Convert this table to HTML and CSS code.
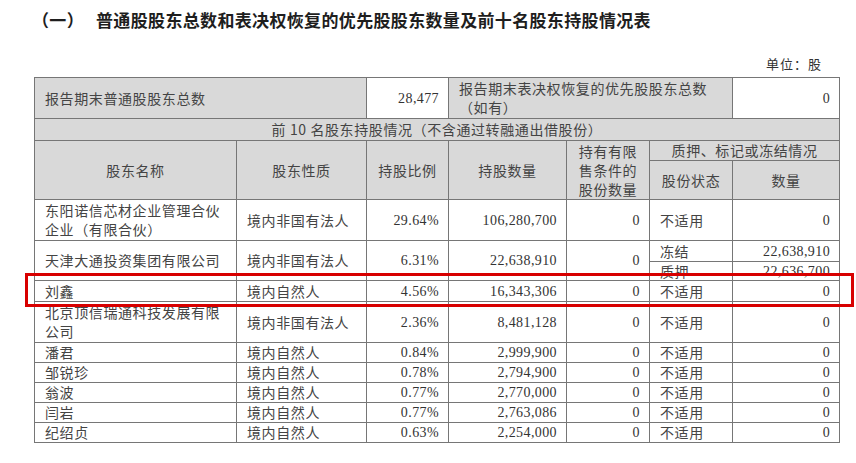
FILE: index.html
```html
<!DOCTYPE html>
<html lang="zh-CN">
<head>
<meta charset="utf-8">
<title>普通股股东总数及前十名股东持股情况表</title>
<link rel="stylesheet" href="styles.css">
</head>
<body>
<div class="page">
  <h2 class="title"><span class="title-no">（一）</span>普通股股东总数和表决权恢复的优先股股东数量及前十名股东持股情况表</h2>
  <div class="unit">单位：股</div>
  <div class="table-wrap">
    <table class="holders">
      <colgroup>
        <col class="c-name"><col class="c-type"><col class="c-ratio"><col class="c-qty"><col class="c-limit"><col class="c-state"><col class="c-amount">
      </colgroup>
      <tr class="r-tall">
        <td colspan="2" class="hd">报告期末普通股股东总数</td>
        <td class="num">28,477</td>
        <td colspan="3" class="hd">报告期末表决权恢复的优先股股东总数<br>（如有）</td>
        <td class="num">0</td>
      </tr>
      <tr class="r-sec">
        <td colspan="7" class="hd center">前 10 名股东持股情况（不含通过转融通出借股份）</td>
      </tr>
      <tr class="r-h1">
        <td rowspan="2" class="hd center">股东名称</td>
        <td rowspan="2" class="hd center">股东性质</td>
        <td rowspan="2" class="hd center">持股比例</td>
        <td rowspan="2" class="hd center">持股数量</td>
        <td rowspan="2" class="hd center">持有有限<br>售条件的<br>股份数量</td>
        <td colspan="2" class="hd center">质押、标记或冻结情况</td>
      </tr>
      <tr class="r-h2">
        <td class="hd center">股份状态</td>
        <td class="hd center">数量</td>
      </tr>
      <tr class="r-tall">
        <td>东阳诺信芯材企业管理合伙企业（有限合伙）</td>
        <td>境内非国有法人</td>
        <td class="num">29.64%</td>
        <td class="num">106,280,700</td>
        <td class="num">0</td>
        <td>不适用</td>
        <td class="num">0</td>
      </tr>
      <tr class="r-sub1">
        <td rowspan="2">天津大通投资集团有限公司</td>
        <td rowspan="2">境内非国有法人</td>
        <td rowspan="2" class="num">6.31%</td>
        <td rowspan="2" class="num">22,638,910</td>
        <td rowspan="2" class="num">0</td>
        <td>冻结</td>
        <td class="num">22,638,910</td>
      </tr>
      <tr class="r-sub2">
        <td class="pledge">质押</td>
        <td class="num pledge">22,636,700</td>
      </tr>
      <tr class="r-one">
        <td>刘鑫</td>
        <td>境内自然人</td>
        <td class="num">4.56%</td>
        <td class="num">16,343,306</td>
        <td class="num">0</td>
        <td>不适用</td>
        <td class="num">0</td>
      </tr>
      <tr class="r-tall">
        <td>北京顶信瑞通科技发展有限公司</td>
        <td>境内非国有法人</td>
        <td class="num">2.36%</td>
        <td class="num">8,481,128</td>
        <td class="num">0</td>
        <td>不适用</td>
        <td class="num">0</td>
      </tr>
      <tr class="r-small">
        <td>潘君</td>
        <td>境内自然人</td>
        <td class="num">0.84%</td>
        <td class="num">2,999,900</td>
        <td class="num">0</td>
        <td>不适用</td>
        <td class="num">0</td>
      </tr>
      <tr class="r-small">
        <td>邹锐珍</td>
        <td>境内自然人</td>
        <td class="num">0.78%</td>
        <td class="num">2,794,900</td>
        <td class="num">0</td>
        <td>不适用</td>
        <td class="num">0</td>
      </tr>
      <tr class="r-small">
        <td>翁波</td>
        <td>境内自然人</td>
        <td class="num">0.77%</td>
        <td class="num">2,770,000</td>
        <td class="num">0</td>
        <td>不适用</td>
        <td class="num">0</td>
      </tr>
      <tr class="r-small">
        <td>闫岩</td>
        <td>境内自然人</td>
        <td class="num">0.77%</td>
        <td class="num">2,763,086</td>
        <td class="num">0</td>
        <td>不适用</td>
        <td class="num">0</td>
      </tr>
      <tr class="r-small">
        <td>纪绍贞</td>
        <td>境内自然人</td>
        <td class="num">0.63%</td>
        <td class="num">2,254,000</td>
        <td class="num">0</td>
        <td>不适用</td>
        <td class="num">0</td>
      </tr>
    </table>
    <div class="highlight"></div>
  </div>
</div>
</body>
</html>
```

FILE: styles.css
```css
html, body {
  margin: 0;
  padding: 0;
  background: #ffffff;
}

.page {
  width: 856px;
  height: 463px;
  font-family: "Noto Sans CJK SC", "Noto Sans", sans-serif;
  color: #3a3a3a;
}

.title {
  margin: 0;
  padding: 10px 0 0 32px;
  font-size: 17px;
  line-height: 20px;
  font-weight: 700;
  letter-spacing: 0.34px;
  color: #1e1e1e;
}

.title-no {
  margin-right: 12px;
}

.unit {
  margin-top: 25px;
  width: 822px;
  text-align: right;
  font-size: 13px;
  line-height: 18px;
  letter-spacing: 1px;
  color: #333333;
}

.table-wrap {
  position: relative;
  margin: 4px 0 0 34px;
  width: 805px;
}

.holders {
  width: 805px;
  table-layout: fixed;
  border-collapse: collapse;
  font-size: 14px;
  letter-spacing: 0.6px;
  color: #444444;
}

.c-name { width: 202px; }
.c-type { width: 130px; }
.c-ratio { width: 82px; }
.c-qty { width: 118px; }
.c-limit { width: 83px; }
.c-state { width: 83px; }
.c-amount { width: 107px; }

.holders td {
  border: 1px solid #767676;
  padding: 0 9px 0 10px;
  line-height: 19px;
  vertical-align: middle;
  text-align: left;
  white-space: normal;
}

.holders td.hd {
  background: #d9d9d9;
}

.holders td.center {
  text-align: center;
  padding: 0 8px;
}

.holders td.num {
  text-align: right;
  font-family: "Liberation Serif", "Times New Roman", serif;
  letter-spacing: 0.4px;
  padding-right: 9px;
  color: #333333;
}

.r-tall td { height: 40px; }
.r-sec td { height: 21px; }
.r-h1 td { height: 19px; }
.r-h2 td { height: 38px; }
.r-sub1 td { height: 20px; }
.r-sub2 td { height: 18px; }
.r-one td { height: 20px; }
.r-small td { height: 19px; }

.holders td.pledge {
  line-height: 17px;
}

.highlight {
  position: absolute;
  left: -9px;
  top: 196px;
  width: 829px;
  height: 34px;
  box-sizing: border-box;
  border: 3px solid #d80000;
  pointer-events: none;
}
```
